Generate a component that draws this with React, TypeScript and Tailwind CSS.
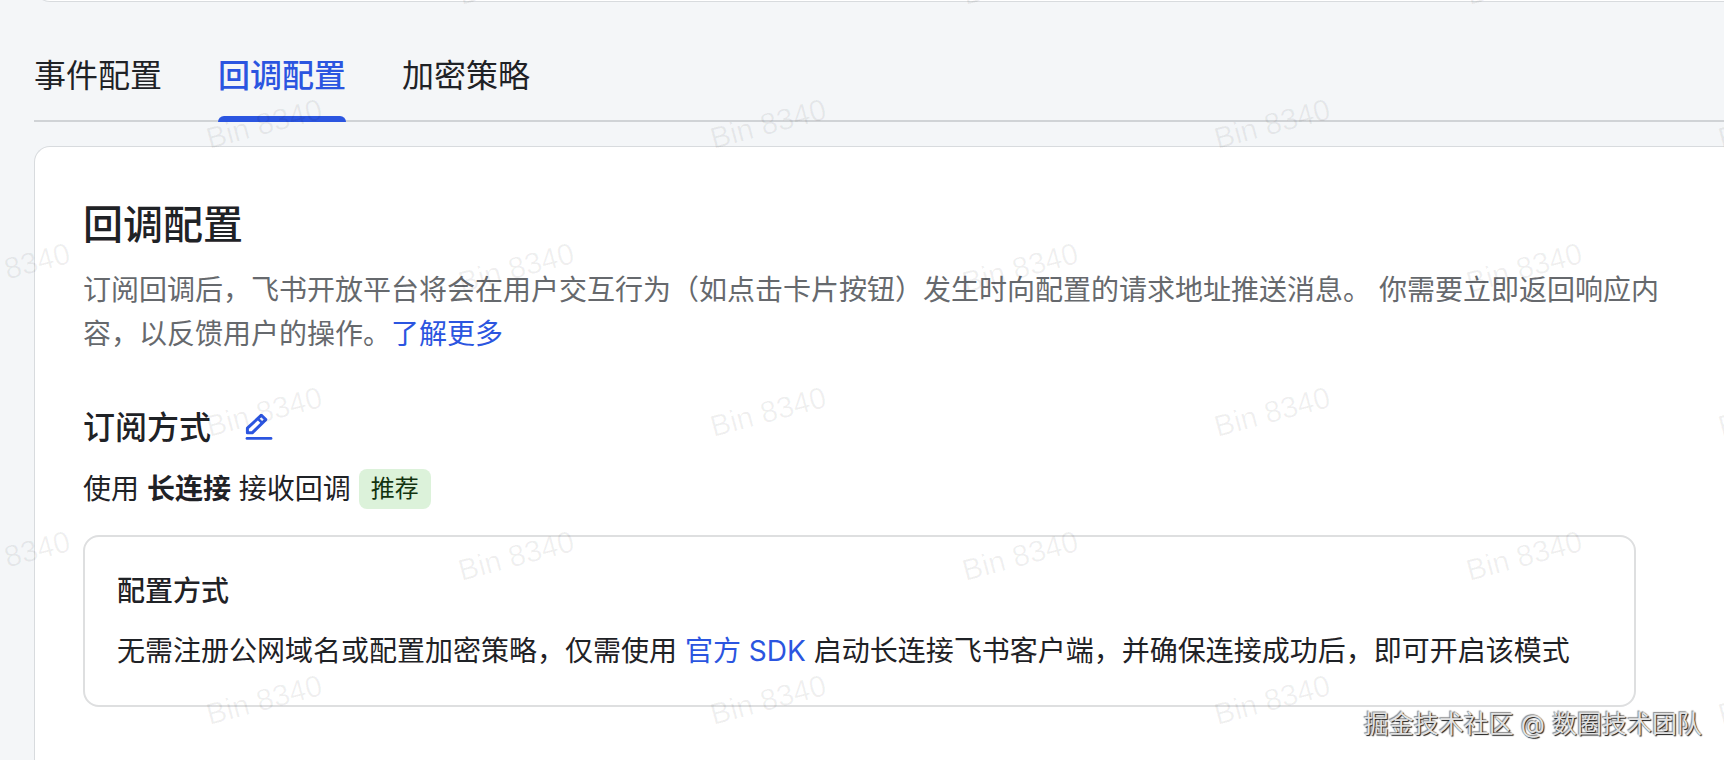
const tabs = [
  { key: "event", label: "事件配置" },
  { key: "callback", label: "回调配置" },
  { key: "encrypt", label: "加密策略" },
];

const ACTIVE_TAB = "callback";

const EditIcon = () => (
  <svg viewBox="0 0 28 28" className="w-7 h-7" fill="none" aria-hidden="true">
    <path
      d="M2.4 18.8v-4.6L16.4 1.2l4.4 4.4L7.2 18.8z"
      stroke="currentColor"
      strokeWidth="3"
      strokeLinejoin="round"
    />
    <path d="M12.8 4.6l4.6 4.6" stroke="currentColor" strokeWidth="2.6" />
    <path d="M2 24.4h24" stroke="currentColor" strokeWidth="2.8" strokeLinecap="round" />
  </svg>
);

const Watermark = () => (
  <div
    aria-hidden="true"
    className="absolute inset-0 overflow-hidden pointer-events-none select-none font-['Liberation_Sans',Arial,sans-serif]"
  >
    <div className="-mt-[92px]">
      {[0, 1, 2, 3, 4, 5].map((row) => (
        <div key={row} className={row % 2 ? "flex h-36 ml-3" : "flex h-36 -ml-60"}>
          {[0, 1, 2, 3].map((col) => (
            <div key={col} className="w-[504px] shrink-0 flex items-center justify-center">
              <span className="-rotate-15 text-[30px] leading-8 text-black/6">Bin 8340</span>
            </div>
          ))}
        </div>
      ))}
    </div>
  </div>
);

const Tabs = () => (
  <nav role="tablist" className="flex gap-14 border-b-2 border-[#d0d3d6]">
    {tabs.map((tab) => {
      const active = tab.key === ACTIVE_TAB;
      return (
        <button
          key={tab.key}
          type="button"
          role="tab"
          aria-selected={active}
          className={
            active
              ? "relative pb-[22px] text-[32px] leading-[44px] font-medium text-[#2b55e0]"
              : "relative pb-[22px] text-[32px] leading-[44px]"
          }
        >
          {tab.label}
          {active && (
            <span className="absolute inset-x-0 -bottom-0.5 h-1.5 rounded-t-md bg-[#2b55e0]" />
          )}
        </button>
      );
    })}
  </nav>
);

const ConfigCard = () => (
  <div className="mr-10 px-8 py-8 border-2 border-[#dedfe0] rounded-2xl">
    <h4 className="text-[28px] leading-[44px] font-medium">配置方式</h4>
    <p className="mt-4 text-[28px] leading-[44px]">
      无需注册公网域名或配置加密策略，仅需使用{" "}
      <a href="#sdk" className="text-[#2b55e0]">官方 SDK</a>{" "}
      启动长连接飞书客户端，并确保连接成功后，即可开启该模式
    </p>
  </div>
);

export default function App() {
  return (
    <div
      lang="zh-CN"
      className="relative flex flex-col min-h-screen overflow-hidden pl-[34px] bg-[#f4f6f8] text-[#1f2226] font-[Inter,'Noto_Sans_CJK_SC',sans-serif]"
    >
      {/* bottom edge of the card above */}
      <div className="h-8 -mt-[30px] shrink-0 bg-white border-b border-l border-[#d8dbde] rounded-bl-2xl" />

      <div className="pt-[52px]">
        <Tabs />
      </div>

      <main className="flex-1 mt-6 pt-[50px] pl-12 pr-12 pb-12 bg-white border-t border-l border-[#d8dbde] rounded-tl-2xl">
        <h2 className="text-[40px] leading-[56px] font-medium">回调配置</h2>
        <p className="mt-[15px] text-[28px] leading-[44px] text-[#66696d]">
          订阅回调后，飞书开放平台将会在用户交互行为（如点击卡片按钮）发生时向配置的请求地址推送消息。 你需要立即返回响应内容，以反馈用户的操作。
          <a href="#more" className="text-[#2b55e0]">了解更多</a>
        </p>

        <div className="mt-12 flex items-center gap-[34px]">
          <h3 className="text-[32px] leading-[48px] font-medium">订阅方式</h3>
          <button type="button" aria-label="编辑订阅方式" className="text-[#2b55e0]">
            <EditIcon />
          </button>
        </div>

        <div className="mt-[17px] mb-[26px] flex items-center gap-2 text-[28px] leading-10">
          <p>
            使用 <strong className="font-bold">长连接</strong> 接收回调
          </p>
          <span className="px-3 rounded-lg bg-[#dcf2da] text-2xl leading-10 text-[#12330f]">推荐</span>
        </div>

        <ConfigCard />
      </main>

      <Watermark />

      <footer className="absolute right-[22px] bottom-4 text-[25px] leading-10 text-[#e2e2e2] [text-shadow:1px_1px_1px_#1a1a1a,-1px_-1px_1px_#8a8a8a]">
        掘金技术社区 @ 数圈技术团队
      </footer>
    </div>
  );
}
